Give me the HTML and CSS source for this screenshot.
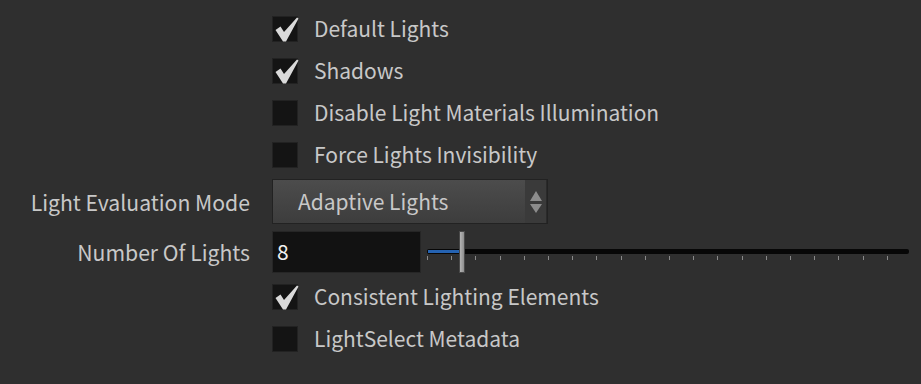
FILE: index.html
```html
<!DOCTYPE html>
<html>
<head>
<meta charset="utf-8">
<link rel="stylesheet" href="styles.css">
</head>
<body>
<div class="panel">
  <div class="label"></div>
  <div class="control check-row">
    <span class="box">
      <svg class="mark" viewBox="0 0 26 26" width="26" height="26"><polygon points="2.5,13 7.5,9.5 11,15 24,0.5 25.5,1.5 13,24.5 10,24.5"/></svg>
    </span>
    <span class="text">Default Lights</span>
  </div>

  <div class="label"></div>
  <div class="control check-row">
    <span class="box">
      <svg class="mark" viewBox="0 0 26 26" width="26" height="26"><polygon points="2.5,13 7.5,9.5 11,15 24,0.5 25.5,1.5 13,24.5 10,24.5"/></svg>
    </span>
    <span class="text">Shadows</span>
  </div>

  <div class="label"></div>
  <div class="control check-row">
    <span class="box"></span>
    <span class="text">Disable Light Materials Illumination</span>
  </div>

  <div class="label"></div>
  <div class="control check-row">
    <span class="box"></span>
    <span class="text">Force Lights Invisibility</span>
  </div>

  <div class="label">Light Evaluation Mode</div>
  <div class="control">
    <div class="menu">
      <span class="menu-value">Adaptive Lights</span>
      <span class="menu-arrows">
        <svg viewBox="0 0 12 24" width="12" height="24"><polygon points="6,1 12,11 0,11"/><polygon points="0,14 12,14 6,23"/></svg>
      </span>
    </div>
  </div>

  <div class="label">Number Of Lights</div>
  <div class="control">
    <div class="field">8</div>
    <div class="slider">
      <div class="track"><div class="fill"></div></div>
      <div class="ticks">
        <i></i><i></i><i></i><i></i><i></i><i></i><i></i><i></i><i></i><i></i>
        <i></i><i></i><i></i><i></i><i></i><i></i><i></i><i></i><i></i><i></i>
      </div>
      <div class="handle"></div>
    </div>
  </div>

  <div class="label"></div>
  <div class="control check-row">
    <span class="box">
      <svg class="mark" viewBox="0 0 26 26" width="26" height="26"><polygon points="2.5,13 7.5,9.5 11,15 24,0.5 25.5,1.5 13,24.5 10,24.5"/></svg>
    </span>
    <span class="text">Consistent Lighting Elements</span>
  </div>

  <div class="label"></div>
  <div class="control check-row">
    <span class="box"></span>
    <span class="text">LightSelect Metadata</span>
  </div>
</div>
</body>
</html>
```
FILE: styles.css
```css
html, body {
  margin: 0;
  padding: 0;
  background: #2f2f2f;
  height: 100%;
}

body {
  font-family: "Noto Sans CJK SC", "Noto Sans", sans-serif;
  font-size: 21px;
  color: #c8c8c8;
  overflow: hidden;
}

.panel {
  display: grid;
  grid-template-columns: 250px 1fr;
  grid-template-rows: 42px 42px 42px 42px 51px 49px 42px 42px;
  column-gap: 22px;
  padding-top: 8px;
}

.label {
  display: flex;
  align-items: center;
  justify-content: flex-end;
  line-height: 1;
  white-space: nowrap;
  font-size: 21.2px;
}

.control {
  display: flex;
  align-items: center;
  line-height: 1;
  white-space: nowrap;
}

.check-row {
  gap: 16px;
}

.box {
  position: relative;
  width: 26px;
  height: 26px;
  box-sizing: border-box;
  background: #141414;
  border: 1px solid #222;
  flex: none;
}

.mark {
  position: absolute;
  left: 0;
  top: 0;
  overflow: visible;
  fill: #dadada;
}

.text {
  padding-bottom: 1px;
}

.menu {
  width: 276px;
  height: 45px;
  box-sizing: border-box;
  border: 1px solid #222;
  background: linear-gradient(#4c4c4c, #3d3d3d);
  display: flex;
  align-items: stretch;
}

.menu-value {
  flex: 1;
  display: flex;
  align-items: center;
  padding-left: 25px;
  color: #c8c8c8;
}

.menu-arrows {
  width: 21px;
  background: #3a3a3a;
  display: flex;
  align-items: center;
  justify-content: center;
  border-right: 1px solid #2a2a2a;
}

.menu-arrows svg {
  fill: #8c8c8c;
}

.field {
  width: 149px;
  height: 42px;
  box-sizing: border-box;
  background: #121212;
  border: 1px solid #262626;
  display: flex;
  align-items: center;
  padding-left: 4px;
  color: #f0f0f0;
  flex: none;
}

.slider {
  position: relative;
  flex: 1;
  height: 42px;
  margin-left: 6px;
  margin-right: 12px;
  padding-top: 18px;
  box-sizing: border-box;
  display: flex;
  flex-direction: column;
}

.track {
  height: 5px;
  box-sizing: border-box;
  background: #070707;
  border-radius: 2px;
  padding: 1px;
}

.fill {
  width: 32px;
  height: 3px;
  background: #2563b2;
}

.ticks {
  display: flex;
  justify-content: space-between;
  margin-top: 2px;
  margin-right: 21px;
}

.ticks i {
  width: 1px;
  height: 4px;
  background: #8a8a8a;
}

.handle {
  position: absolute;
  left: 32px;
  top: 0;
  width: 6px;
  height: 42px;
  box-sizing: border-box;
  border: 1px solid #4a4a4a;
  background: linear-gradient(90deg, #b4b4b4, #8e8e8e);
}
```
